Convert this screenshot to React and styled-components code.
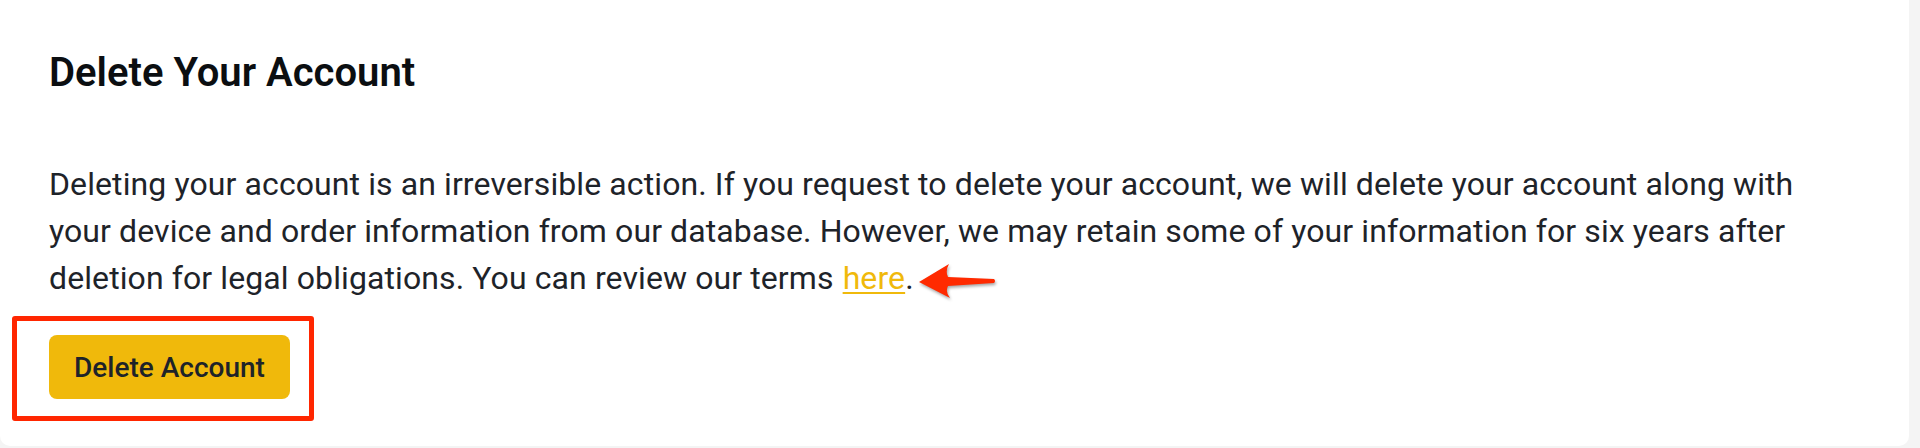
import React from 'react';
import styled, { createGlobalStyle } from 'styled-components';

const GlobalStyle = createGlobalStyle`
  html, body {
    margin: 0;
    padding: 0;
    background: #f4f4f4;
  }
  body {
    font-family: Roboto, "Noto Sans", Arial, sans-serif;
    -webkit-font-smoothing: antialiased;
  }
`;

const Card = styled.section`
  box-sizing: border-box;
  width: 1909px;
  height: 446px;
  background: #ffffff;
  border-radius: 0 0 10px 10px;
  padding: 49px 49px 0 49px;
  display: flex;
  flex-direction: column;
  align-items: flex-start;
`;

const Title = styled.h2`
  margin: 0;
  font-size: 40px;
  line-height: 48px;
  font-weight: 600;
  color: #0b0e11;
`;

const Text = styled.p`
  margin: 64px 0 0 0;
  font-size: 32px;
  line-height: 47px;
  letter-spacing: 0.1px;
  color: #1e2329;
  max-width: 1811px;
`;

const Link = styled.a`
  margin-left: 1px;
  color: #f0b90b;
  text-decoration: underline;
  text-underline-offset: 3px;
  text-decoration-thickness: 2px;
  cursor: pointer;
`;

const ArrowMark = styled.svg`
  display: inline-block;
  vertical-align: middle;
  margin-left: 3px;
  overflow: visible;
  filter: drop-shadow(1px 2px 1.5px rgba(0, 0, 0, 0.35));
`;

const ButtonWrap = styled.div`
  position: relative;
  margin-top: 33px;
`;

const Highlight = styled.div`
  position: absolute;
  left: -37px;
  top: -19px;
  right: -24px;
  bottom: -22px;
  border: 5px solid #ff2600;
  border-radius: 3px;
  pointer-events: none;
`;

const DangerButton = styled.button`
  height: 64px;
  padding: 0 25px;
  border: none;
  border-radius: 8px;
  background: #f0b90b;
  color: #1e2329;
  font-family: inherit;
  font-size: 28px;
  font-weight: 500;
  cursor: pointer;
`;

const Arrow = () => (
  <ArrowMark width="80" height="36" viewBox="0 0 80 36">
    <path
      d="M2 19 L32 1 Q28 8 31 14 L77 16 Q79 18 77 20 L31 23 Q28 29 33 35 Z"
      fill="#ff2a00"
    />
  </ArrowMark>
);

export default function App() {
  return (
    <>
      <GlobalStyle />
      <Card>
        <Title>Delete Your Account</Title>
        <Text>
          Deleting your account is an irreversible action. If you request to delete your account, we will delete your
          account along with your device and order information from our database. However, we may retain some of your
          information for six years after deletion for legal obligations. You can review our terms
          {' '}<Link>here</Link>.<Arrow />
        </Text>
        <ButtonWrap>
          <DangerButton>Delete Account</DangerButton>
          <Highlight />
        </ButtonWrap>
      </Card>
    </>
  );
}
